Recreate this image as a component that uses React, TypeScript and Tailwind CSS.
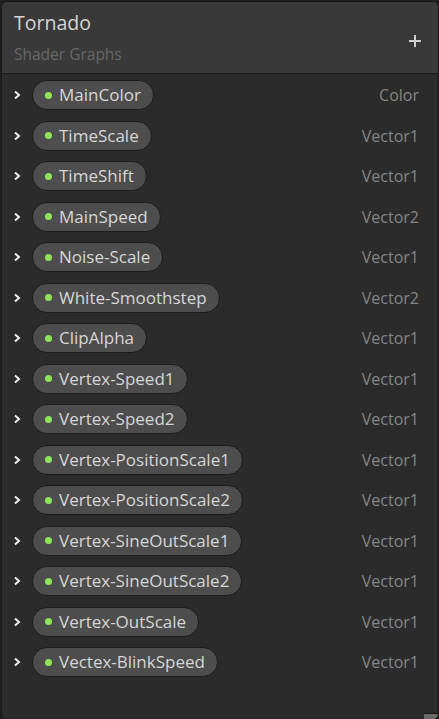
const props: [string, string][] = [
  ["MainColor", "Color"],
  ["TimeScale", "Vector1"],
  ["TimeShift", "Vector1"],
  ["MainSpeed", "Vector2"],
  ["Noise-Scale", "Vector1"],
  ["White-Smoothstep", "Vector2"],
  ["ClipAlpha", "Vector1"],
  ["Vertex-Speed1", "Vector1"],
  ["Vertex-Speed2", "Vector1"],
  ["Vertex-PositionScale1", "Vector1"],
  ["Vertex-PositionScale2", "Vector1"],
  ["Vertex-SineOutScale1", "Vector1"],
  ["Vertex-SineOutScale2", "Vector1"],
  ["Vertex-OutScale", "Vector1"],
  ["Vectex-BlinkSpeed", "Vector1"],
];

function Chevron() {
  return (
    <svg width="9" height="10" viewBox="0 0 9 10" className="shrink-0">
      <path d="M2 1.5 L6 5 L2 8.5" fill="none" stroke="#ececec" strokeWidth="2" />
    </svg>
  );
}

export default function App() {
  return (
    <div
      className="w-[439px] h-[719px] bg-[#1f1f1f] overflow-hidden"
      style={{ fontFamily: '"Open Sans", "Noto Sans", sans-serif' }}
    >
      <div className="h-full ml-px mt-px border border-[#191919] rounded-[6px] bg-[#2b2b2b] flex flex-col overflow-hidden relative">
        <div className="h-[72px] shrink-0 bg-[#393939] border-b border-[#1e1e1e] flex items-center justify-between pl-3 pr-4">
          <div className="flex flex-col">
            <div className="text-[19.5px] leading-[26px] text-[#d4d4d4] mt-[-1px]">Tornado</div>
            <div className="text-[15.5px] leading-[20px] text-[#676767] mt-[8px]">Shader Graphs</div>
          </div>
          <svg width="14" height="14" viewBox="0 0 14 14" className="mt-[6px]">
            <path d="M7 1 V13 M1 7 H13" stroke="#cfcfcf" strokeWidth="2" />
          </svg>
        </div>
        <div className="flex flex-col pt-px">
          {props.map(([name, type]) => (
            <div key={name} className="h-[40.5px] flex items-center pl-[11px] pr-[19px]">
              <Chevron />
              <div className="ml-[10px] h-[30px] rounded-full bg-[#4d4d4d] border border-[#1c1c1c] flex items-center pl-[12px] pr-[12px]">
                <span className="w-[7px] h-[7px] rounded-full bg-[#8fe35a] shrink-0" />
                <span className="ml-[7px] text-[17px] leading-none text-[#d6d6d6] pb-[1px]">{name}</span>
              </div>
              <div className="ml-auto text-[16px] text-[#858585]">{type}</div>
            </div>
          ))}
        </div>
        <div className="absolute right-0 bottom-0 w-[14px] h-[6px] bg-[#6a6a6a] border-t border-[#141414]" />
      </div>
    </div>
  );
}
